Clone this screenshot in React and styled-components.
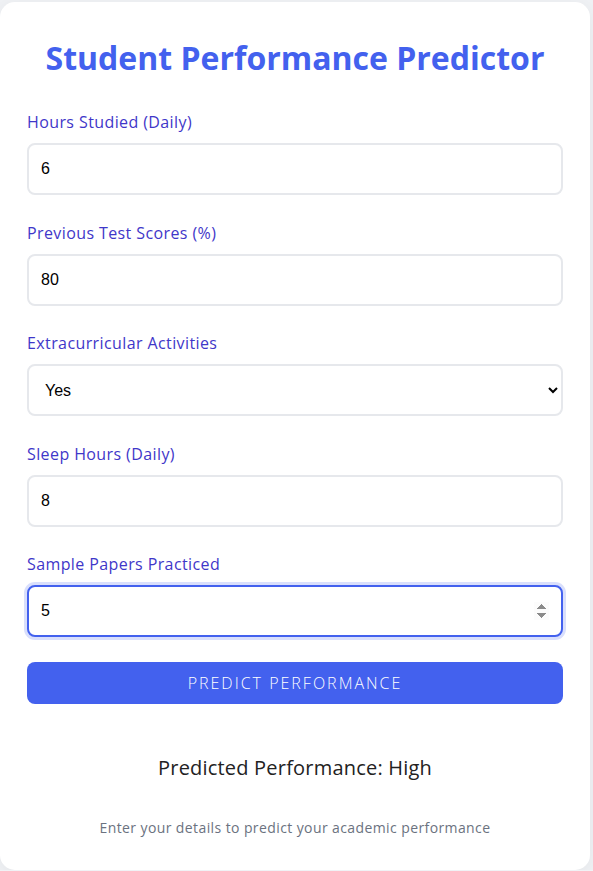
import React, { useState } from "react";
import styled, { createGlobalStyle } from "styled-components";

const GlobalStyle = createGlobalStyle`
  html, body {
    margin: 0;
    padding: 0;
    background: #f0f2f5;
  }
  body {
    font-family: "Open Sans", "Noto Sans", sans-serif;
  }
  * { box-sizing: border-box; }
`;

const Card = styled.div`
  width: 590px;
  margin: 2px 0 0 0;
  background: #ffffff;
  border-radius: 15px;
  box-shadow: 0 4px 20px rgba(0, 0, 0, 0.06);
  padding: 32px 27px 32px;
`;

const Title = styled.h1`
  margin: 0 0 28px;
  text-align: center;
  color: #4361ee;
  font-size: 32px;
  font-weight: 700;
  line-height: 48px;
`;

const Group = styled.div`
  margin-bottom: 25.5px;
`;

const Label = styled.label`
  display: block;
  color: #3f37c9;
  font-size: 16px;
  letter-spacing: 0.4px;
  line-height: 24px;
  margin-bottom: 9px;
`;

const fieldBase = `
  display: block;
  width: 100%;
  height: 52px;
  border: 2px solid #e6e8ec;
  border-radius: 8px;
  background: #fff;
  font-family: "Liberation Sans", Arial, sans-serif;
  font-size: 16px;
  color: #000;
  outline: none;
`;

const Input = styled.input`
  ${fieldBase}
  padding: 0 12px;
  border-color: ${(p) => (p.$active ? "#4361ee" : "#e6e8ec")};
  box-shadow: ${(p) => (p.$active ? "0 0 0 3px rgba(67, 97, 238, 0.2)" : "none")};
`;

const Select = styled.select`
  ${fieldBase}
  padding: 0 12px;
`;

const Button = styled.button`
  display: block;
  width: 100%;
  height: 42px;
  margin-top: -0.5px;
  border: none;
  border-radius: 8px;
  background: #4361ee;
  color: #fff;
  font-family: "Open Sans", sans-serif;
  font-weight: 300;
  font-size: 16px;
  letter-spacing: 2px;
  text-transform: uppercase;
  cursor: pointer;
`;

const Result = styled.div`
  margin-top: 49px;
  text-align: center;
  color: #222;
  font-size: 20px;
  letter-spacing: 0.2px;
  line-height: 30px;
`;

const Footer = styled.p`
  margin: 33.5px 0 0;
  text-align: center;
  color: #6b7280;
  font-size: 14px;
  letter-spacing: 0.4px;
  line-height: 21px;
`;

const fields = [
  { label: "Hours Studied (Daily)", value: "6" },
  { label: "Previous Test Scores (%)", value: "80" },
  { label: "Extracurricular Activities", select: true },
  { label: "Sleep Hours (Daily)", value: "8" },
  { label: "Sample Papers Practiced", value: "5", active: true },
];

export default function App() {
  const [vals, setVals] = useState(fields.map((f) => f.value || "Yes"));
  return (
    <>
      <GlobalStyle />
      <Card>
        <Title>Student Performance Predictor</Title>
        {fields.map((f, i) => (
          <Group key={f.label}>
            <Label>{f.label}</Label>
            {f.select ? (
              <Select
                value={vals[i]}
                onChange={(e) => setVals(vals.map((v, j) => (j === i ? e.target.value : v)))}
              >
                <option>Yes</option>
                <option>No</option>
              </Select>
            ) : (
              <Input
                type="number"
                $active={f.active}
                autoFocus={f.active}
                value={vals[i]}
                onChange={(e) => setVals(vals.map((v, j) => (j === i ? e.target.value : v)))}
              />
            )}
          </Group>
        ))}
        <Button>Predict Performance</Button>
        <Result>Predicted Performance: High</Result>
        <Footer>Enter your details to predict your academic performance</Footer>
      </Card>
    </>
  );
}
